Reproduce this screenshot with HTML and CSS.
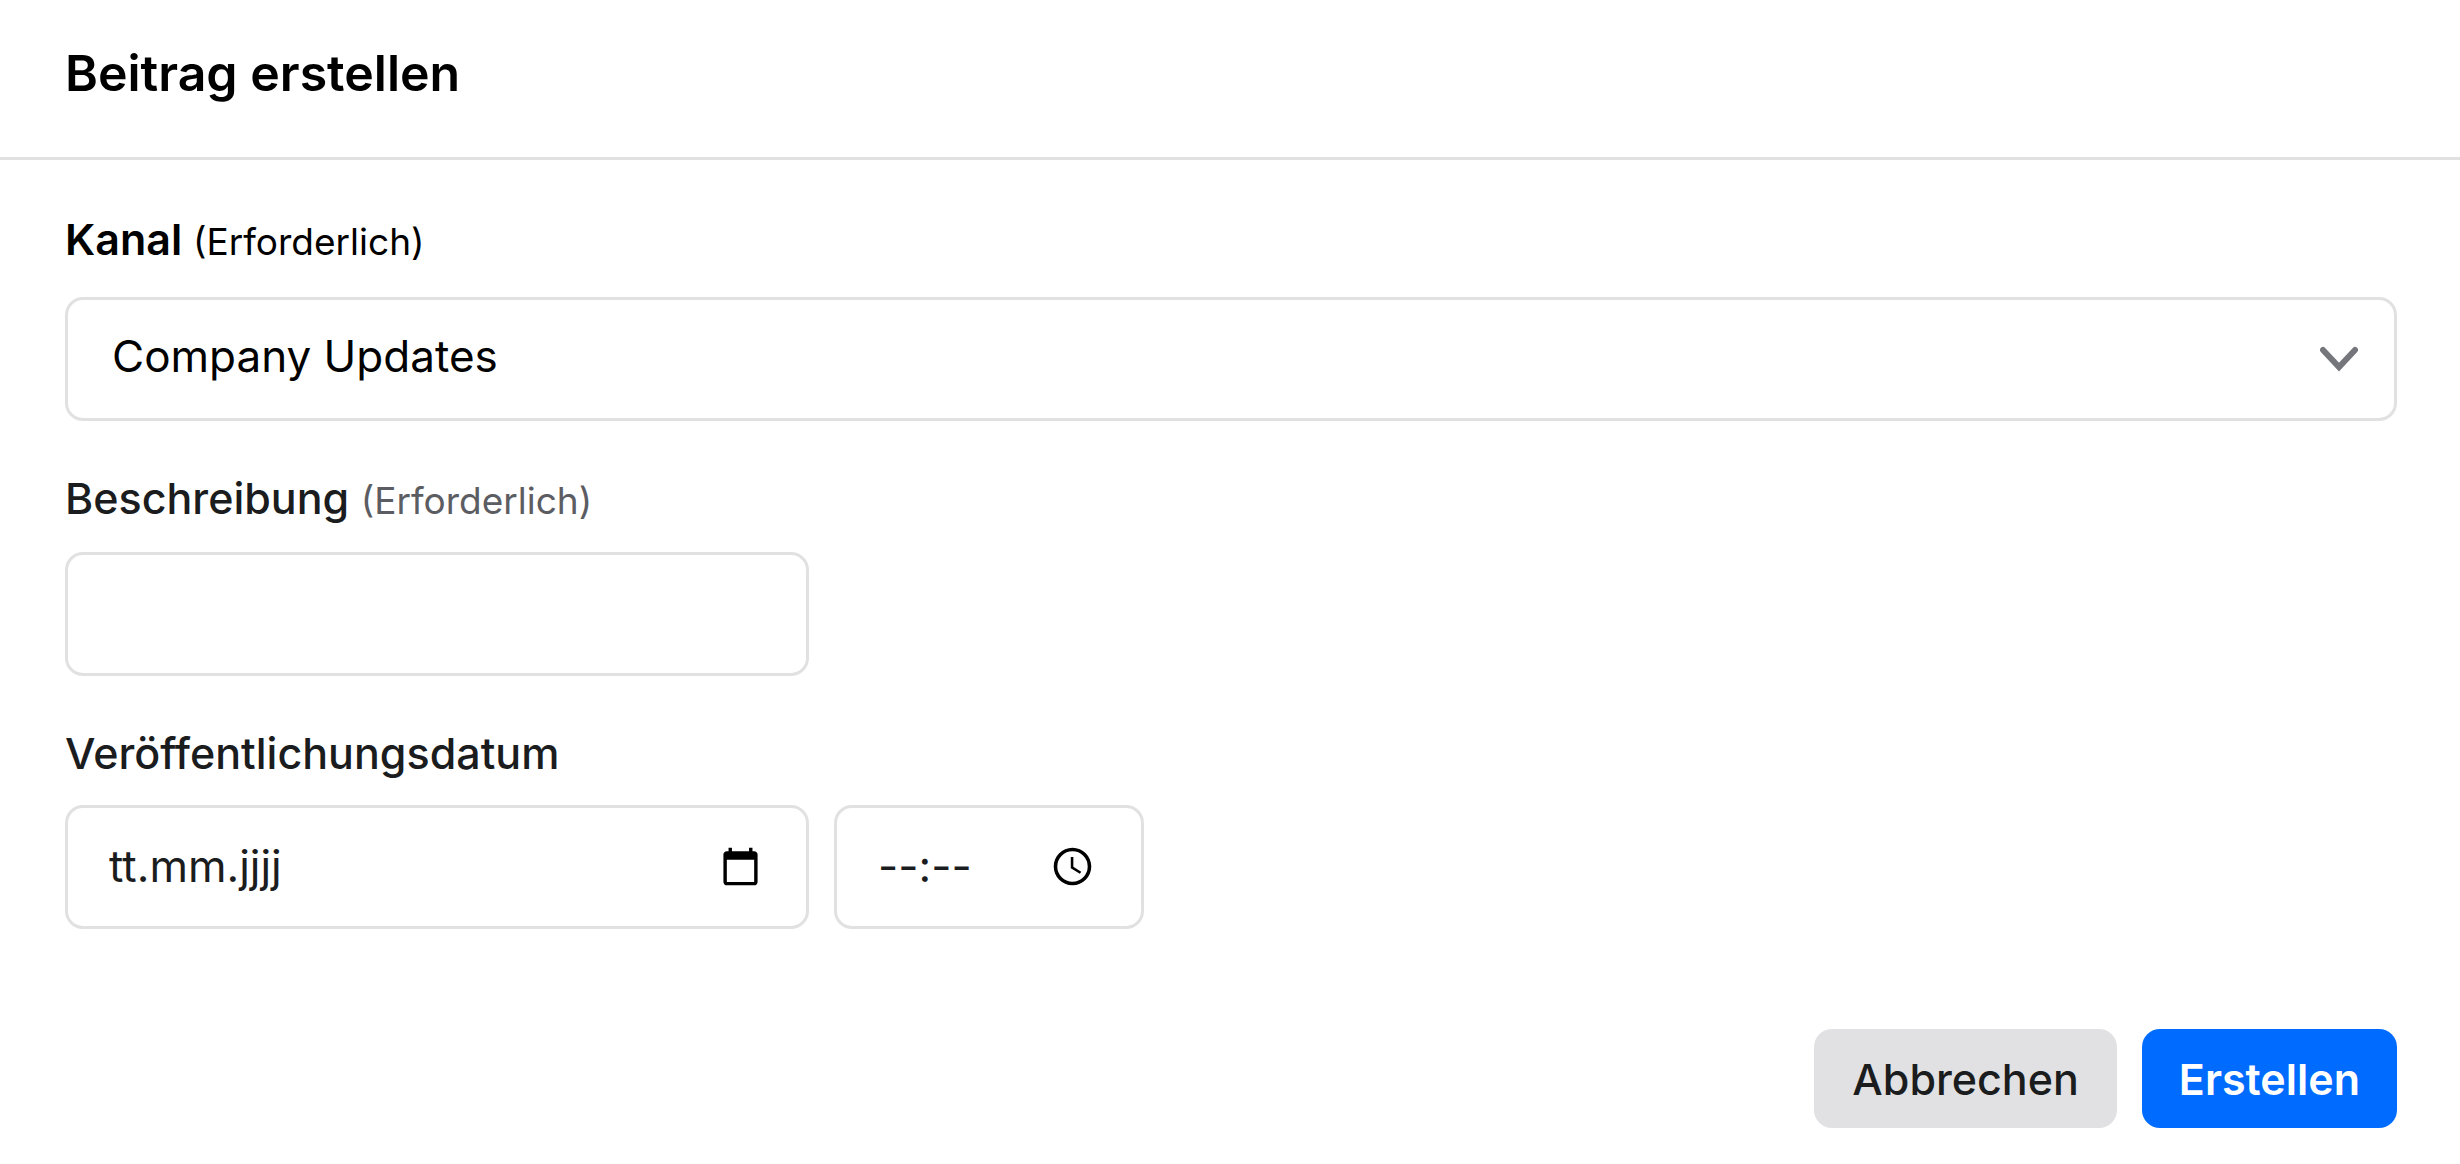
FILE: index.html
```html
<!DOCTYPE html>
<html lang="de">

<head>
  <meta charset="utf-8">
  <title>Beitrag erstellen</title>
  <meta name="viewport" content="width=device-width">
  <link rel="stylesheet" href="styles.css">
</head>

<body>
  <div class="m-dialog">
    <header class="hd">
      <h1>Beitrag erstellen</h1>
    </header>
    <form class="cnt">
      <div class="field">
        <label class="strong" for="channel">Kanal <small>(Erforderlich)</small></label>
        <div class="select">
          <select id="channel">
            <option>Company Updates</option>
          </select>
          <svg class="arrow" viewBox="0 0 38 26" aria-hidden="true">
            <path d="M3 4L19 21L35 4" />
          </svg>
        </div>
      </div>
      <div class="field">
        <label for="description">Beschreibung <small>(Erforderlich)</small></label>
        <input class="box date" type="text" id="description">
      </div>
      <div class="field">
        <label for="date">Veröffentlichungsdatum</label>
        <div class="row">
          <div class="box date">
            <input type="text" id="date" placeholder="tt.mm.jjjj">
            <button class="picker" type="button" aria-label="Datum wählen">
              <svg viewBox="0 0 24 24">
                <path d="M20 3h-1V1h-2v2H7V1H5v2H4c-1.100 0-2 .9-2 2v16c0 1.100.9 2 2 2h16c1.100 0 2-.9 2-2V5c0-1.100-.9-2-2-2zm0 18H4V8h16v13z" />
              </svg>
            </button>
          </div>
          <div class="box time">
            <input type="text" id="time" placeholder="--:--" aria-label="Uhrzeit">
            <button class="picker" type="button" aria-label="Uhrzeit wählen">
              <svg viewBox="0 0 24 24">
                <path d="M11.990 1C5.900 1 1 5.900 1 12s4.900 11 10.990 11C18.100 23 23 18.100 23 12S18.100 1 11.990 1zM12 20.900a8.900 8.900 0 1 1 0-17.800 8.900 8.900 0 0 1 0 17.800zM12.500 6.500H11v6.500l5.300 3.300.8-1.300-4.600-2.800z" />
              </svg>
            </button>
          </div>
        </div>
      </div>
      <div class="actions">
        <button class="btn" type="button">Abbrechen</button>
        <button class="btn primary" type="submit">Erstellen</button>
      </div>
    </form>
  </div>
</body>

</html>
```

FILE: styles.css
```css
* {
  margin: 0;
  padding: 0;
  box-sizing: border-box;
}

body {
  background: #fff;
  color: #1b1c1e;
  font-family: Inter, "Liberation Sans", sans-serif;
  font-size: 44px;
  line-height: 56px;
}

input,
select,
button {
  border: 0;
  background: none;
  color: inherit;
  font: inherit;
}

.m-dialog .hd {
  padding: 41px 65px 52px;
  border-bottom: 3px solid #e1e1e2;
}

.m-dialog h1 {
  color: #000;
  font-size: 50px;
  font-weight: 600;
  line-height: 64px;
}

.m-dialog .cnt {
  display: flex;
  flex-direction: column;
  gap: 50px;
  padding: 52px 63px 36px 65px;
}

.field {
  display: flex;
  flex-direction: column;
  gap: 24px;
}

.field label {
  font-size: 43px;
  font-weight: 500;
  line-height: 55px;
}

.field small {
  color: #5c5d62;
  font-size: 37px;
  font-weight: 400;
}

.field .strong {
  padding-bottom: 4px;
  color: #000;
  font-weight: 600;
}

.field .strong small {
  color: #000;
}

.select {
  position: relative;
}

.select select,
.box {
  height: 124px;
  border: 3px solid #e1e1e2;
  border-radius: 18px;
}

.select select {
  display: block;
  width: 100%;
  padding: 0 110px 6px 44px;
  appearance: none;
  color: #000;
}

.select .arrow {
  position: absolute;
  top: 49px;
  right: 39px;
  width: 38px;
  height: 26px;
  fill: none;
  stroke: #75767c;
  stroke-width: 6;
  stroke-linecap: round;
  pointer-events: none;
}

.row {
  display: flex;
  gap: 25px;
}

.box {
  display: flex;
  align-items: center;
  justify-content: space-between;
  padding: 0 45px 2px 41px;
}

.box input {
  flex: 1;
  min-width: 0;
}

.box input::placeholder {
  color: #1b1c1e;
  opacity: 1;
}

.date {
  width: 744px;
}

.time {
  width: 310px;
  padding-right: 48px;
}

.picker {
  display: flex;
}

.picker svg {
  width: 41px;
  height: 41px;
  fill: #000;
}

.actions {
  display: flex;
  justify-content: flex-end;
  gap: 25px;
  padding-top: 50px;
}

.btn {
  height: 99px;
  padding: 0 38px;
  border-radius: 18px;
  background: #e1e1e3;
  font-size: 43px;
  font-weight: 500;
}

.btn.primary {
  padding: 0 37px;
  background: #006bff;
  color: #fff;
  font-weight: 600;
}
```
